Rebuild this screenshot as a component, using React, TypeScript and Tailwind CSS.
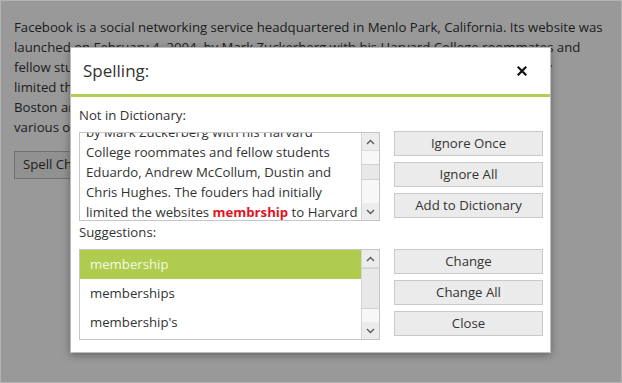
import React from 'react';

const font = { fontFamily: '"Open Sans", "Noto Sans", sans-serif' };

function ScrollArrow({ dir }: { dir: 'up' | 'down' }) {
  return (
    <div className="h-[17px] flex items-center justify-center bg-[#ececec]">
      <svg width="9" height="6" viewBox="0 0 9 6" fill="none" stroke="#5a5a5a" strokeWidth="1.4">
        {dir === 'up' ? <path d="M1 5 L4.5 1.5 L8 5" /> : <path d="M1 1 L4.5 4.5 L8 1" />}
      </svg>
    </div>
  );
}

function Scrollbar({ top, thumb, rest }: { top: number; thumb: number; rest: number }) {
  return (
    <div className="w-[18px] flex flex-col border-l border-[#d4d4d4] bg-[#ececec]">
      <ScrollArrow dir="up" />
      <div className="bg-[#f7f7f7] border-t border-[#dcdcdc]" style={{ height: top }} />
      <div className="bg-[#e8e8e8] border-y border-[#d2d2d2]" style={{ height: thumb }} />
      <div className="bg-[#f7f7f7] flex-1" style={{ minHeight: rest }} />
      <ScrollArrow dir="down" />
    </div>
  );
}

function Btn({ label }: { label: string }) {
  return (
    <button className="h-[25px] w-full bg-[#ebebeb] border border-[#c9c9c9] text-[13.2px] text-[#333] leading-none">
      {label}
    </button>
  );
}

export default function App() {
  const suggestions = ['membership', 'memberships', "membership's"];

  return (
    <div className="relative w-[622px] h-[383px] bg-white border border-[#b4b4b4] overflow-hidden" style={font}>
      {/* page behind the dialog */}
      <div className="px-[13px] pt-[16px]">
        <p className="text-[13.2px] leading-[20px] text-[#333] whitespace-nowrap">
          Facebook is a social networking service headquartered in Menlo Park, California. Its website was
          <br />
          launched on February 4, 2004, by Mark Zuckerberg with his Harvard College roommates and
          <br />
          fellow students Eduardo Saverin, Andrew McCollum, Dustin Moskovitz and Chris initially
          <br />
          limited the website&apos;s membership to Harvard students, but later expanded it to the
          <br />
          Boston area, the Ivy League, and Stanford University. It gradually added students at
          <br />
          various other universities.
        </p>
        <button className="block mt-[14px] h-[28px] px-[8px] bg-[#f2f2f2] border border-[#bdbdbd] text-[13.2px] text-[#333]">
          Spell Check
        </button>
      </div>

      {/* modal overlay */}
      <div className="absolute inset-0 bg-black/40" />

      {/* dialog */}
      <div className="absolute left-[69px] top-[46px] w-[481px] h-[306px] bg-white border border-[#bdbdbd] shadow-[0_2px_8px_rgba(0,0,0,0.35)] flex flex-col">
        <div className="h-[49px] flex items-center justify-between pl-[12px] pr-[23px] border-b-[3px] border-[#b3cc55]">
          <span className="text-[17px] text-[#333]">Spelling:</span>
          <svg width="10" height="10" viewBox="0 0 10 10" stroke="#111" strokeWidth="2.2" strokeLinecap="square">
            <path d="M1.5 1.5 L8.5 8.5 M8.5 1.5 L1.5 8.5" />
          </svg>
        </div>

        <div className="px-[8px] pt-[8px] grid grid-cols-[301px_149px] gap-x-[14px] text-[13.2px] text-[#333]">
          <div className="leading-[20px] mb-[7px]">Not in Dictionary:</div>
          <div />

          <div className="h-[89px] border border-[#c6c6c6] flex">
            <div className="flex-1 overflow-hidden pl-[6px]">
              <div className="leading-[20px] -mt-[11px] whitespace-nowrap">
                by Mark Zuckerberg with his Harvard
                <br />
                College roommates and fellow students
                <br />
                Eduardo, Andrew McCollum, Dustin and
                <br />
                Chris Hughes. The fouders had initially
                <br />
                limited the websites <span className="font-bold text-[#e0141e]">membrship</span> to Harvard
              </div>
            </div>
            <Scrollbar top={14} thumb={16} rest={4} />
          </div>
          <div className="flex flex-col gap-[6px] -mt-[1px]">
            <Btn label="Ignore Once" />
            <Btn label="Ignore All" />
            <Btn label="Add to Dictionary" />
          </div>

          <div className="leading-[20px] mt-[1px] mb-[7px]">Suggestions:</div>
          <div />

          <div className="h-[91px] border border-[#c6c6c6] flex">
            <div className="flex-1 flex flex-col">
              {suggestions.map((s, i) => (
                <div
                  key={s}
                  className={
                    i === 0
                      ? 'h-[29px] flex items-center pl-[10px] bg-[#afcc4f] text-[#f4f8e4]'
                      : 'h-[29px] flex items-center pl-[10px]'
                  }
                >
                  {s}
                </div>
              ))}
            </div>
            <Scrollbar top={0} thumb={41} rest={12} />
          </div>
          <div className="flex flex-col gap-[6px]">
            <Btn label="Change" />
            <Btn label="Change All" />
            <Btn label="Close" />
          </div>
        </div>
      </div>
    </div>
  );
}
